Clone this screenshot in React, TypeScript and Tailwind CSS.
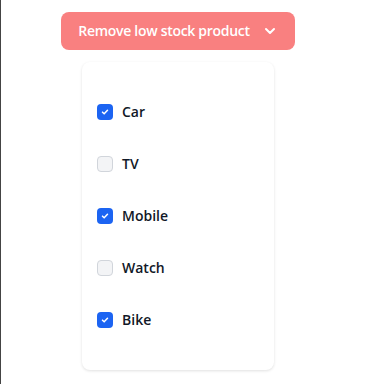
import { ChevronDown } from 'lucide-react';

const ITEMS = [
  { id: 1, name: 'Car', checked: true },
  { id: 2, name: 'TV', checked: false },
  { id: 3, name: 'Mobile', checked: true },
  { id: 4, name: 'Watch', checked: false },
  { id: 5, name: 'Bike', checked: true },
];

const Check = ({ on }: { on: boolean }) =>
  on ? (
    <span className="w-4 h-4 rounded-[4px] bg-[#1c64f2] flex items-center justify-center">
      <svg width="10" height="10" viewBox="0 0 12 12" fill="none">
        <path d="M3 6.2l2 2 4-4.2" stroke="white" strokeWidth="1.8" strokeLinecap="round" strokeLinejoin="round" />
      </svg>
    </span>
  ) : (
    <span className="w-4 h-4 rounded-[4px] bg-[#f3f4f6] border border-[#d1d5db]" />
  );

export default function App() {
  return (
    <div className="min-h-screen bg-white border-l border-[#444] font-['Open_Sans',sans-serif]">
      <div className="flex flex-col items-start pt-3">
        {/* BOTON */}
        <button className="ml-[60px] h-[38px] w-[234px] rounded-lg bg-[#f98080] text-white text-sm font-semibold tracking-[-0.3px] flex items-center justify-center gap-3">
          Remove low stock product
          <ChevronDown size={16} strokeWidth={3} />
        </button>

        {/* LISTA */}
        <div className="mt-3 ml-[81px] w-[192px] rounded-lg bg-white shadow-[0_1px_3px_rgba(0,0,0,0.12)] pt-6 pb-6 px-[15px]">
          {ITEMS.map((item) => (
            <label key={item.id} className="h-[52px] flex items-center gap-[9px]">
              <Check on={item.checked} />
              <span className="text-sm font-semibold text-[#111827]">{item.name}</span>
            </label>
          ))}
        </div>
      </div>
    </div>
  );
}
